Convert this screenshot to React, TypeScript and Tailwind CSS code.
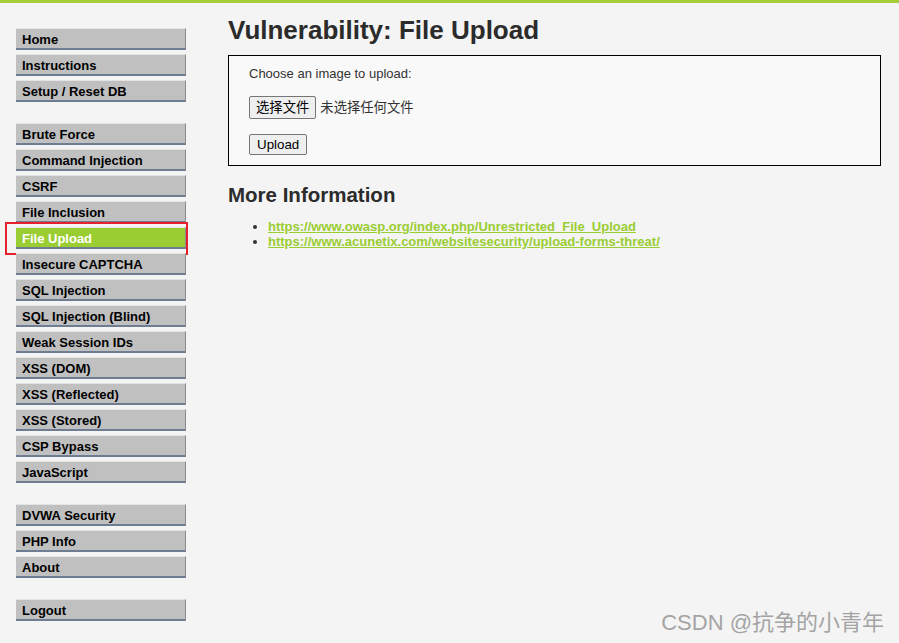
const groups = [
  ["Home", "Instructions", "Setup / Reset DB"],
  [
    "Brute Force",
    "Command Injection",
    "CSRF",
    "File Inclusion",
    "File Upload",
    "Insecure CAPTCHA",
    "SQL Injection",
    "SQL Injection (Blind)",
    "Weak Session IDs",
    "XSS (DOM)",
    "XSS (Reflected)",
    "XSS (Stored)",
    "CSP Bypass",
    "JavaScript",
  ],
  ["DVWA Security", "PHP Info", "About"],
  ["Logout"],
];

const links = [
  "https://www.owasp.org/index.php/Unrestricted_File_Upload",
  "https://www.acunetix.com/websitesecurity/upload-forms-threat/",
];

const MenuItem = ({ label }: { label: string }) => {
  const selected = label === "File Upload";
  return (
    <li className="relative mb-[4px]">
      <a
        href="#"
        className={`block h-[22px] pl-[6px] text-[13px] font-bold leading-[22px] border-t border-t-[#e4e4e4] border-b-2 border-b-[#6f7d92] border-r border-r-[#8c8c8c] ${
          selected ? "bg-[#9acd32] text-white" : "bg-[#c0c0c0] text-black"
        }`}
      >
        {label}
      </a>
      {selected && (
        <span className="pointer-events-none absolute -left-[11px] -top-[5px] -right-[2px] -bottom-[6px] border-2 border-[#e8202e]" />
      )}
    </li>
  );
};

export default function App() {
  return (
    <div
      className="relative min-h-[643px] overflow-hidden bg-[#f4f4f4] text-[#333]"
      style={{ fontFamily: '"Liberation Sans", Arial, "Noto Sans CJK SC", sans-serif' }}
    >
      <div className="h-[3px] bg-[#a6ce39]" />
      <div className="flex">
        <nav className="w-[186px] shrink-0 pl-[16px] pt-[25px]">
          {groups.map((g, i) => (
            <ul key={i} className="mb-[21px]">
              {g.map((item) => (
                <MenuItem key={item} label={item} />
              ))}
            </ul>
          ))}
        </nav>

        <main className="ml-[42px] mr-[18px] flex-1 pt-[12px]">
          <h1 className="text-[26px] font-bold leading-[30px] text-[#2b2b2b]">Vulnerability: File Upload</h1>

          <div className="mt-[10px] border border-black bg-[#f9f9f9] pl-[20px] pt-[10px] pb-[9px]">
            <p className="text-[13px] leading-[15px]">Choose an image to upload:</p>
            <div className="mt-[15px] flex items-center">
              <button className="h-[23px] rounded-[2px] border border-[#767676] bg-[#efefef] px-[6px] text-[13.33px] text-black">
                选择文件
              </button>
              <span className="ml-[4px] text-[13.33px] text-[#333]">未选择任何文件</span>
            </div>
            <button className="mt-[15px] h-[21px] rounded-[2px] border border-[#767676] bg-[#efefef] px-[7px] text-[13.33px] leading-[19px] text-black">
              Upload
            </button>
          </div>

          <h2 className="mt-[17px] text-[20.5px] font-bold leading-[24px] text-[#2b2b2b]">More Information</h2>
          <ul className="mt-[12px] list-disc pl-[40px]">
            {links.map((l) => (
              <li key={l} className="text-[13px] leading-[15px]">
                <a href="#" className="font-bold text-[#9acd32] underline">
                  {l}
                </a>
              </li>
            ))}
          </ul>
        </main>
      </div>

      <div className="absolute right-[15px] top-[608px] text-[22px] leading-[30px] text-[#a4a4a4]">
        CSDN @抗争的小青年
      </div>
    </div>
  );
}
